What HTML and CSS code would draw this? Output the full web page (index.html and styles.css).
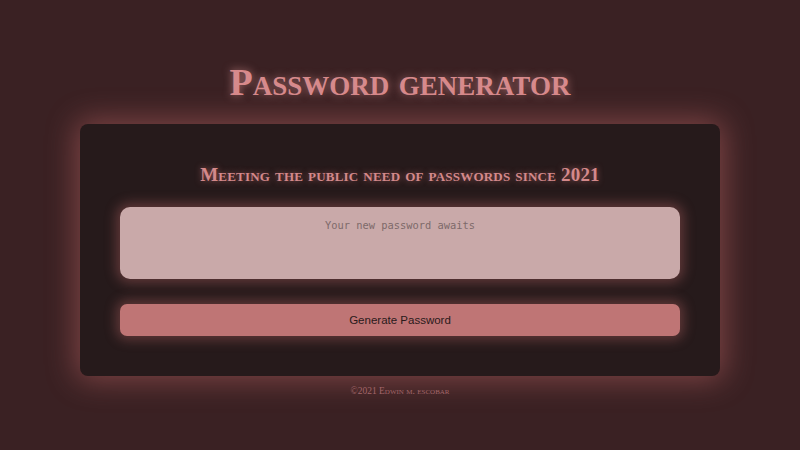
FILE: index.html
```html
<!DOCTYPE html>
<html>
<head>
<meta charset="utf-8">
<link rel="stylesheet" href="styles.css">
</head>
<body>
<main class="page">
  <h1 class="title">Password generator</h1>
  <section class="card">
    <h2 class="subtitle">Meeting the public need of passwords since 2021</h2>
    <textarea class="output" placeholder="Your new password awaits" readonly></textarea>
    <button class="generate">Generate Password</button>
  </section>
  <footer class="footer">©2021 Edwin m. escobar</footer>
</main>
</body>
</html>
```
FILE: styles.css
```css
html, body {
  margin: 0;
  padding: 0;
}
body {
  background: #3a2123;
  font-family: "Liberation Serif", "Times New Roman", serif;
  width: 800px;
  height: 450px;
  overflow: hidden;
}
.page {
  display: flex;
  flex-direction: column;
  align-items: center;
  padding-top: 60px;
}
.title {
  margin: 0;
  font-size: 38px;
  line-height: 44px;
  height: 40px;
  font-weight: bold;
  font-variant: small-caps;
  color: #d78a8c;
  text-shadow: 0 0 8px rgba(240, 160, 160, 0.6);
}
.card {
  margin-top: 24px;
  width: 640px;
  height: 252px;
  box-sizing: border-box;
  background: #261a1b;
  border-radius: 8px;
  box-shadow: 0 0 30px 4px rgba(210, 110, 110, 0.45);
  display: flex;
  flex-direction: column;
  align-items: center;
  padding: 38px 40px 0;
}
.subtitle {
  margin: 0;
  font-size: 19px;
  line-height: 25px;
  letter-spacing: 0.2px;
  font-weight: bold;
  font-variant: small-caps;
  color: #d4898b;
  text-shadow: 0 0 6px rgba(230, 130, 130, 0.6);
}
.output {
  margin-top: 20px;
  width: 560px;
  height: 72px;
  box-sizing: border-box;
  border: none;
  border-radius: 10px;
  background: #c9a9a9;
  resize: none;
  padding: 12px 10px;
  text-align: center;
  font-family: "DejaVu Sans Mono", monospace;
  font-size: 10.4px;
  color: #555;
  box-shadow: 0 0 12px 4px rgba(200, 110, 110, 0.35);
  outline: none;
}
.output::placeholder {
  color: #7d6a6a;
}
.generate {
  margin-top: 25px;
  width: 560px;
  height: 32px;
  border: none;
  border-radius: 7px;
  background: #bf7575;
  font-family: "Liberation Sans", Arial, sans-serif;
  font-size: 11.5px;
  color: #2a1a1b;
  box-shadow: 0 0 12px 4px rgba(200, 110, 110, 0.35);
}
.footer {
  margin-top: 10px;
  font-size: 9.5px;
  font-variant: small-caps;
  color: #a36669;
}
```
